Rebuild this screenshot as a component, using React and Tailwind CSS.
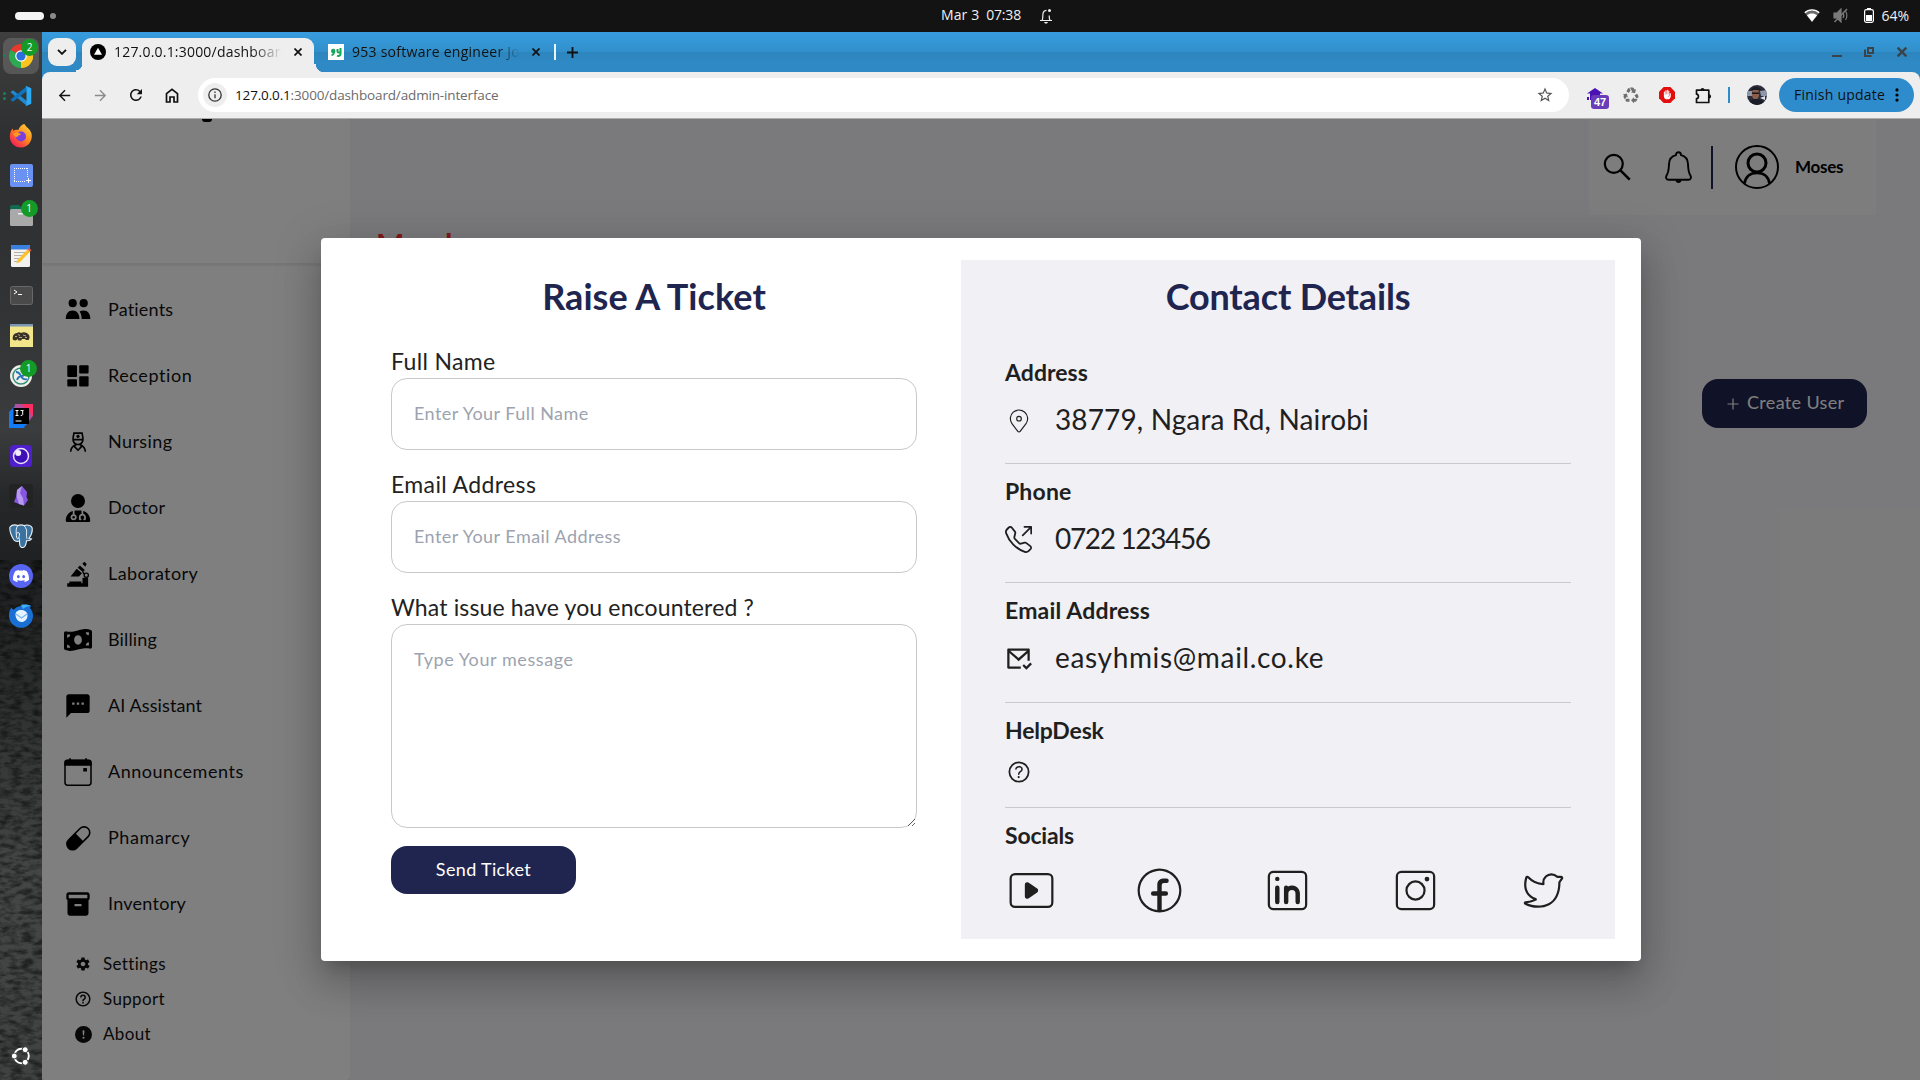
import React from 'react';
import { LiaUserNurseSolid } from 'react-icons/lia';
import { FaUserDoctor, FaMoneyBillWave } from 'react-icons/fa6';
import { MdSms, MdInventory2, MdArrowBack, MdArrowForward, MdRefresh, MdStarBorder, MdRecycling, MdFrontHand } from 'react-icons/md';
import { BsCapsule, BsExclamationCircleFill, BsTelephoneOutbound } from 'react-icons/bs';
import { IoMdSettings } from 'react-icons/io';
import { IoHelpCircleOutline } from 'react-icons/io5';
import { BiHelpCircle } from 'react-icons/bi';
import { RiMailCheckLine } from 'react-icons/ri';
import { CiLocationOn, CiYoutube, CiFacebook, CiLinkedin, CiInstagram, CiTwitter } from 'react-icons/ci';
import { SiDiscord } from 'react-icons/si';

/* ---------- sidebar icons ---------- */
const People = () => (
  <svg width="28" height="28" viewBox="0 0 28 28">
    <circle cx="8.700" cy="7.200" r="4.100" />
    <circle cx="19.700" cy="7.200" r="4.100" />
    <path d="M1.700 22.900C1.900 17.600 4.300 14.500 8.600 14.500s6.600 3.100 6.900 8.400z" />
    <path d="M15.600 15.500c1.100-.7 2.500-1 4-1 4.300 0 6.500 3.100 6.800 8.400h-8.700c-.1-3-.7-5.600-2.100-7.400z" />
  </svg>
);
const Tiles = () => (
  <svg width="28" height="28" viewBox="0 0 28 28">
    <rect x="3.300" y="3.300" width="9.700" height="11.800" rx="1" />
    <rect x="15.200" y="3.300" width="9.400" height="8.200" rx="1" />
    <rect x="3.300" y="17.300" width="9.700" height="7.200" rx="1" />
    <rect x="15.200" y="14.200" width="9.400" height="10.300" rx="1" />
  </svg>
);
const Microscope = () => (
  <svg width="28" height="28" viewBox="0 0 28 28">
    <path d="M18.300 3.800 20.600 1.700l2 2.200-1.300 2.900z" />
    <path d="M15.900 5.500l4.900 4.400-1.900 2.200-5.200-4.400z" />
    <path d="M12.700 8.800l5.300 4.500-3 3.300H6.600z" />
    <path d="M18 11.500l2 .2c.4 1 .4 2-.5 3z" />
    <circle cx="22.300" cy="15.300" r="2.100" fill="none" stroke="#000" strokeWidth="1.300" />
    <path d="M18.500 17.800h5.600v8.900H3.200v-3.400h2.200v-1.700h12v1.700h1.100z" />
  </svg>
);
const Calendar = () => (
  <svg width="28" height="28" viewBox="0 0 28 28">
    <rect x="1" y="2.400" width="26" height="24.800" rx="2.600" fill="none" stroke="#000" strokeWidth="1.500" />
    <path d="M.3 7.800V4.600a3 3 0 0 1 3-3h21.400a3 3 0 0 1 3 3v3.200zM5.200.3h1.700v3H5.200zM21.200.3h1.700v3h-1.700z" />
    <rect x="19.200" y="10" width="3.800" height="3.600" rx=".6" />
  </svg>
);

const NAV = [
  [<People />, 'Patients', 'tracking-[0.18px]'],
  [<Tiles />, 'Reception', 'tracking-[0.58px]'],
  [<LiaUserNurseSolid size={26} className="-ml-px" />, 'Nursing', 'tracking-[0.4px]'],
  [<FaUserDoctor size={28} />, 'Doctor', 'tracking-[0.3px]'],
  [<Microscope />, 'Laboratory', 'tracking-[0.4px]'],
  [<FaMoneyBillWave size={28} />, 'Billing', 'tracking-[0.15px]'],
  [<MdSms size={28} />, 'AI Assistant', 'tracking-[0.1px]'],
  [<Calendar />, 'Announcements', 'tracking-[0.52px]'],
  [<BsCapsule size={26} />, 'Phamarcy', 'tracking-[0.6px]'],
  [<MdInventory2 size={28} />, 'Inventory', 'tracking-[0.26px]'],
];

function Sidebar() {
  const row = 'h-[35.300px] flex items-center pl-[32px] gap-[11px]';
  return (
    <aside className="w-[308px] shrink-0 bg-white rounded-[4px] shadow-[0_0_8px_rgba(0,0,0,0.15)] flex flex-col overflow-hidden">
      <div className="h-[145px] shrink-0 border-b border-[#ececec] shadow-[0_1px_3px_rgba(0,0,0,0.12)]">
        <div className="ml-[160px] w-[10px] h-[3px] bg-black rounded-b-full" />
      </div>
      <nav className="mt-[13px] flex flex-col">
        {NAV.map(([icon, label, track]) => (
          <div key={label} className="h-[66px] flex items-center pl-[22px] gap-4">
            <span className="w-[28px] flex justify-center">{icon}</span>
            <span className={'text-[18px] leading-[22px] pb-[2px] text-[#101010] ' + track}>{label}</span>
          </div>
        ))}
      </nav>
      <div className="mt-[9px] flex flex-col text-[17px] tracking-[0.35px] text-[#101010]">
        <div className={row}><span className="w-[18px] flex justify-center"><IoMdSettings size={16} /></span>Settings</div>
        <div className={row}><span className="w-[18px] flex justify-center"><BiHelpCircle size={18} /></span>Support</div>
        <div className={row}><span className="w-[18px] flex justify-center"><BsExclamationCircleFill size={17} /></span>About</div>
      </div>
    </aside>
  );
}

function Content() {
  return (
    <main className="flex-1 bg-[#f5f5f8] flex flex-col">
      <div className="h-[96px] w-[287px] ml-[1239px] bg-[#fafafa] flex items-center pl-[14px] shrink-0">
        <svg width="28" height="28" viewBox="0 0 28 28" fill="none" stroke="#000" strokeWidth="2.200">
          <circle cx="10.800" cy="10.800" r="9" /><path d="M17.200 17.200l9.500 9.500" strokeWidth="2.600" />
        </svg>
        <svg className="ml-[34px]" width="27" height="33" viewBox="0 0 27 33" fill="none" stroke="#000" strokeWidth="1.900" strokeLinejoin="round">
          <path d="M11 4.200C11 2.300 12 1.200 13.500 1.200s2.500 1.100 2.500 3c4.200 1 6.800 4 7 8.800.2 6 .6 8.600 2.200 11 1.400 2.200.8 4.800-2 4.800H3.800c-2.800 0-3.400-2.600-2-4.800C3.400 21.600 3.800 19 4 13c.2-4.800 2.800-7.800 7-8.800z" />
          <path d="M10.500 29.300h6c-.3 1.700-1.300 2.700-3 2.700s-2.700-1-3-2.700z" fill="#000" stroke="none" />
        </svg>
        <div className="ml-[19px] w-[2px] h-[43px] bg-[#202550]" />
        <svg width="44" height="44" viewBox="0 0 44 44" fill="none" stroke="#000" className="ml-[22px]">
          <circle cx="22" cy="22" r="21" strokeWidth="2" />
          <circle cx="22" cy="18" r="9" strokeWidth="3" />
          <path d="M9.500 38.500C10.500 31.500 15.500 27.800 22 27.800s11.500 3.700 12.500 10.700" strokeWidth="2.800" />
        </svg>
        <span className="ml-[16px] text-[17px] font-bold tracking-[-0.3px] whitespace-nowrap">Moses</span>
      </div>
      <h1 className="mt-[11px] ml-[26px] text-[30px] leading-[36px] font-bold text-[#ff3535]">Members</h1>
      <button className="mt-[117px] ml-[1352px] w-[165px] h-[49px] rounded-[16px] bg-[#212450] text-white text-[18px] tracking-[0.34px] flex items-center pl-[25px] gap-[8px] whitespace-nowrap">
        <svg width="12" height="12" viewBox="0 0 12 12" stroke="#fff" strokeWidth="1.200"><path d="M6 .5v11M.5 6h11" /></svg>
        <span className="pb-[2px]">Create User</span>
      </button>
    </main>
  );
}

/* ---------- modal ---------- */
const SECTIONS = [
  ['Address', 'h-[119px]', 'tracking-[0.05px]', <CiLocationOn size={28} />, '38779, Ngara Rd, Nairobi', 'tracking-[0.13px]'],
  ['Phone', 'h-[119px]', 'tracking-[0.17px]', <BsTelephoneOutbound size={27} />, '0722 123456', 'tracking-[-1.35px]'],
  ['Email Address', 'h-[120px]', 'tracking-[0.17px]', <RiMailCheckLine size={27} />, 'easyhmis@mail.co.ke', 'tracking-[0.66px]'],
];

function Modal() {
  const field = 'block w-full rounded-[16px] border border-[#c9c9cb] bg-white px-[22px] text-[18px] placeholder:text-[#9ca3af] placeholder:opacity-100 outline-none ';
  const label = 'block h-[36px] leading-[38px] text-[23px] text-[#222] ';
  const title = 'h-[70px] leading-[72px] text-center text-[36px] font-bold text-[#202550] ';
  const head = 'h-[43px] leading-[45px] text-[23px] font-bold ';
  return (
    <div className="w-[1320px] h-[723px] bg-white rounded-[4px] px-[26px] py-[22px] flex shadow-[0px_11px_15px_-7px_rgba(0,0,0,0.2),0px_24px_38px_3px_rgba(0,0,0,0.14),0px_9px_46px_8px_rgba(0,0,0,0.12)]">
      <div className="w-[614px] px-[44px]">
        <h2 className={title + 'tracking-[0.05px]'}>Raise A Ticket</h2>
        <label className={label + 'mt-[12px] tracking-[0.35px]'}>Full Name</label>
        <input className={field + 'h-[72px] pb-[2px] tracking-[0.45px]'} placeholder="Enter Your Full Name" />
        <label className={label + 'mt-[15px] tracking-[0.37px]'}>Email Address</label>
        <input className={field + 'h-[72px] pb-[2px] tracking-[0.45px]'} placeholder="Enter Your Email Address" />
        <label className={label + 'mt-[15px] tracking-[0.14px]'}>What issue have you encountered ?</label>
        <textarea className={field + 'h-[204px] py-[20px] leading-[28px] resize tracking-[0.58px]'} placeholder="Type Your message" />
        <button className="mt-[18px] w-[185px] h-[48px] pb-[2px] rounded-[16px] bg-[#202550] text-white text-[18px] tracking-[0.35px]">Send Ticket</button>
      </div>
      <div className="w-[654px] h-[679px] bg-[#f0f0f5] px-[44px] text-[#1f1f1f]">
        <h2 className={title + 'tracking-[-0.16px]'}>Contact Details</h2>
        <div className="mt-[15px]">
          {SECTIONS.map(([name, height, t1, icon, value, t2]) => (
            <section key={name} className={'pt-[5px] border-b border-[#c9c9ce] ' + height}>
              <h3 className={head + t1}>{name}</h3>
              <div className="h-[52px] flex items-center gap-[22px]">
                <span className="w-[28px] pt-[3px] flex justify-center"><span className="-ml-px">{icon}</span></span>
                <span className={'text-[28px] leading-[52px] ' + t2}>{value}</span>
              </div>
            </section>
          ))}
          <section className="h-[105px] pt-[5px] border-b border-[#c9c9ce]">
            <h3 className={head + 'tracking-[-0.18px]'}>HelpDesk</h3>
            <div className="h-[42px] flex items-center"><IoHelpCircleOutline size={28} /></div>
          </section>
          <section className="pt-[5px]">
            <h3 className={head + 'tracking-[-0.17px]'}>Socials</h3>
            <div className="h-[67px] mr-[1px] pt-px flex items-center justify-between">
              <CiYoutube size={53} /><CiFacebook size={53} /><CiLinkedin size={53} /><CiInstagram size={53} /><CiTwitter size={53} />
            </div>
          </section>
        </div>
      </div>
    </div>
  );
}

/* ---------- desktop dock ---------- */
const Badge = ({ children }) => (
  <span className="absolute -top-[5px] -right-[5px] w-[17px] h-[17px] rounded-full bg-[#149a26] text-white text-[10px] leading-[17px] text-center font-['Open_Sans',sans-serif]">{children}</span>
);
const Chrome = () => (
  <svg width="24" height="24" viewBox="0 0 24 24">
    <path d="M12 12 1.600 6A12 12 0 0 1 22.400 6z" fill="#e33b2e" />
    <path d="M12 12 22.400 6A12 12 0 0 1 12 24z" fill="#fcc31e" />
    <path d="M12 12V24A12 12 0 0 1 1.600 6z" fill="#2da94f" />
    <path d="M12 6h10.400a12 12 0 0 1-5.200 16.800z" fill="#fcc31e" />
    <circle cx="12" cy="12" r="5.800" fill="#fff" /><circle cx="12" cy="12" r="4.600" fill="#2a6fe0" />
  </svg>
);
const Code = () => (
  <svg width="22" height="22" viewBox="0 0 24 24">
    <path d="M.5 8 3.200 5.800 18.500 17.500V23z" fill="#1f8ad2" /><path d="M.5 16 3.200 18.200 18.500 6.500V1z" fill="#0e73bd" />
    <path d="M17 .8l6.200 2.800v16.800L17 23.200l1-2V3z" fill="#2cabf2" />
  </svg>
);
const Firefox = () => (
  <svg width="24" height="24" viewBox="0 0 24 24">
    <defs><linearGradient id="ff" x1="1" y1="0" x2=".2" y2="1"><stop offset="0" stopColor="#ffe245" /><stop offset=".5" stopColor="#ff8a1c" /><stop offset="1" stopColor="#f5155c" /></linearGradient></defs>
    <path d="M15.500 0c1 3 5.500 4.500 7 9.500 1.500 7-3.500 14-10.500 14S.8 18.500.8 12.500C.8 9 2 6 3.700 4.500l.6 2.200C6 5.500 8 5.500 9.500 6 10 3.500 12.500.5 15.500 0z" fill="url(#ff)" />
    <circle cx="12" cy="12.500" r="5" fill="#7a3fe0" /><path d="M4 10c3-2 6-2 8 .5-2 .8-3 1-3.500 2.500C6.500 13 5 12 4 10z" fill="#ff9a20" />
  </svg>
);
const Shot = () => (
  <svg width="23" height="23" viewBox="0 0 23 23"><rect width="23" height="23" rx="2" fill="#6a92f3" /><path d="M4 4.500h14M4 17.500h12M4.500 4v14M17.500 4v10" fill="none" stroke="#fff" strokeDasharray="1 1" /><path d="M18.500 14v5M16 16.500h5" stroke="#fff" /></svg>
);
const Files = () => (
  <svg width="23" height="21" viewBox="0 0 23 21"><path d="M0 2a2 2 0 0 1 2-2h7l2 2h10v8H0z" fill="#0f6b50" /><rect y="4" width="23" height="17" rx="1.500" fill="#a9a9a9" /><rect x="8" y="8" width="7" height="1.500" fill="#eee" /></svg>
);
const Editor = () => (
  <svg width="22" height="24" viewBox="0 0 22 24"><rect x="1" y="1" width="19" height="22" rx="1.500" fill="#f4f2ee" /><path d="M1 2.500A1.500 1.500 0 0 1 2.500 1h16A1.500 1.500 0 0 1 20 2.500V5.500H1z" fill="#3a80df" /><path d="M4 8.500h12M4 11.500h10M4 14.500h8M4 17.500h6" stroke="#b4b0a8" /><path d="M6.500 19.500l1-3.500L17.500 5.500l2.500 2.200L10 18z" fill="#fbc22b" /><path d="M17.500 5.500l1.500-1.500 2.500 2.200-1.500 1.500z" fill="#e8594f" /></svg>
);
const Terminal = () => (
  <svg className="-mt-px" width="23" height="19" viewBox="0 0 23 19"><rect x=".5" y=".5" width="22" height="18" rx="2" fill="#4a4a4a" stroke="#686868" /><path d="M4 4l3 2-3 2M8 8.500h4" stroke="#fff" fill="none" /></svg>
);
const Beaver = () => (
  <svg width="23" height="23" viewBox="0 0 23 23"><rect width="23" height="23" fill="#f2e58a" /><rect width="23" height="2.500" fill="#7c97b5" /><path d="M3 16c-1-4 1-7 4-7 1-1 3-1 4 0 3-1.500 6-.5 8 2 1 2 .5 4-.5 5h-2.500l-1-1h-3l-.8 1.500H8.500l-1-1.500-1.500 1.500z" fill="#3a3227" /><path d="M8 10.500l2 1M13 11l3 1M5 12.500h2M9 13.500h3M15 13.500h2" stroke="#b3a686" /></svg>
);
const Swirl = () => (
  <svg width="22" height="22" viewBox="0 0 22 22"><circle cx="11" cy="11" r="11" fill="#f0efe9" /><circle cx="11" cy="11" r="8" fill="none" stroke="#2f8f78" strokeWidth="1.500" /><path d="M6 7c3 0 4 2 5 4s3 4 6 3M7 15c1-3 3-4 5-4s4-2 4-5" stroke="#2b73b8" strokeWidth="1.800" fill="none" /></svg>
);
const Idea = () => (
  <svg width="24" height="24" viewBox="0 0 24 24"><path d="M0 8 8 0v16l8 8H0z" fill="#137bf5" /><path d="M6 0h18v12l-8 10L4 12z" fill="#b0509f" /><path d="M12 0h12v12z" fill="#fb2d62" /><path d="M0 10l5-2v10l13 2-4 4H0z" fill="#137bf5" /><rect x="4.500" y="4" width="15.500" height="16" fill="#000" /><path d="M6.500 6.500h3M8 6.500v5M6.500 11.500h3M11.500 6.500h3M13.700 6.500v4q0 1-2 1M6.500 17h6" stroke="#fff" fill="none" /></svg>
);
const Insomnia = () => (
  <svg width="22" height="22" viewBox="0 0 22 22"><rect width="22" height="22" rx="3.500" fill="#4f1fcb" /><circle cx="11" cy="11" r="7.500" fill="#3d0fb5" stroke="#e9e3fa" strokeWidth="1.500" /><circle cx="8.200" cy="8" r="3" fill="#f2eefc" /></svg>
);
const Crystal = () => (
  <svg width="24" height="24" viewBox="0 0 24 24"><rect width="24" height="24" rx="4" fill="#232323" /><path d="M13 2l5 6-.5 5 1.500 3-4 5.500-5-1.500L5 18l2.500-6L8 6z" fill="#8556e0" /><path d="M13 2l-2 7 3 5 1 7.500-5-1.500-2.500-8L8 6z" fill="#b79af0" /></svg>
);
const Bird = () => (
  <svg width="24" height="24" viewBox="0 0 24 24"><path d="M12 2c5-2 8-1 10 0l-1 2c2 2 3 5 3 8a12 12 0 1 1-24-.5C0 8 1 5 2.500 3.500 3 5 4 5.500 5 5.500 7 3 9 2.500 12 2z" fill="#1a6fd4" /><path d="M6.500 10.500c0-3 2.500-4.500 5.500-4.500s6.500 1.500 6.500 5.500-3 6.500-6 6.500-6-3-6-7.500z" fill="#e6f3ff" /><path d="M7 10l5.500 4 5.500-4" stroke="#79b6ee" fill="none" strokeWidth="1.300" /><path d="M12 1c4-1 8 0 10 1-3 0-6 1-8 3z" fill="#3fb0f5" /></svg>
);
const Elephant = () => (
  <svg width="24" height="24" viewBox="0 0 24 24">
    <path d="M1 3C3 .5 7 .8 9 1.500c2-.8 4-.8 6 0 3-1 7-.5 8 2 .8 3-1 8-3 11l2.500.5c-1 1.500-3 2-5 1.700-.3 3-.5 6.300-3.500 6.800-3 .5-3.500-2-3.500-6.500-2 .5-4 1-5.500-1C2.500 12.500.2 6.500 1 3z" fill="#3a72a0" stroke="#eef3f7" strokeWidth="1.100" />
    <path d="M8.500 2C7 4 7 7 7.300 10c.2 2.500 0 4.500 1.700 5M15 1.800c2.300 2 3 4.500 2.500 8-.2 2 .2 4 .5 5M10.500 17c.2-2 .2-3-1-3M8 9c1.500-.8 2.500-.5 2.500 1 0 2-.5 3-1 4.500" fill="none" stroke="#eef3f7" strokeWidth="1" />
  </svg>
);
const DOCK = [
  [<Chrome />, '2'], [<Code />], [<Firefox />], [<Shot />], [<Files />, '1'], [<Editor />], [<Terminal />], [<Beaver />],
  [<Swirl />, '1'], [<Idea />], [<Insomnia />], [<Crystal />], [<Elephant />],
  [<span className="w-[24px] h-[24px] rounded-full bg-[#5865f2] flex items-center justify-center"><SiDiscord size={16} color="#fff" /></span>],
  [<Bird />],
];
const DOTS = { 0: 1, 1: 2 };

function Dock() {
  return (
    <div className="relative w-[42px] shrink-0 bg-[linear-gradient(180deg,#403f3f_0%,#2e3031_10%,#303233_25%,#3a3c3e_38%,#27282a_44%,#1e1f20_52%,#2c2d2d_62%,#444646_80%,#404242_100%)] flex flex-col items-center pt-[3.500px]">
      <svg className="absolute inset-x-0 bottom-0 opacity-50" width="42" height="520">
        <filter id="gravel"><feTurbulence type="fractalNoise" baseFrequency="0.09 0.2" numOctaves="3" seed="4" /><feColorMatrix values="0 0 0 0 0  0 0 0 0 0  0 0 0 0 0  2.600 0 0 0 -1" /></filter>
        <rect width="42" height="520" filter="url(#gravel)" />
      </svg>
      {DOCK.map(([icon, badge], i) => (
        <div key={i} className="relative h-[40px] w-[42px] flex items-center justify-center">
          {i === 0 && <span className="absolute w-[36px] h-[36px] rounded-[8px] bg-white/15" />}
          <span className="absolute left-[3px] flex flex-col gap-[2px]">
            {Array.from({ length: DOTS[i] || 0 }, (_, k) => <i key={k} className="w-[3px] h-[3px] rounded-full bg-[#12855a]" />)}
          </span>
          <span className="relative">{icon}{badge && <Badge>{badge}</Badge>}</span>
        </div>
      ))}
      <svg className="relative mt-auto mb-[14px]" width="20" height="20" viewBox="0 0 20 20">
        <circle cx="10.500" cy="10" r="7.300" fill="none" stroke="#fff" strokeWidth="1.900" />
        <g fill="#fff" stroke="#3a3a3a" strokeWidth="1"><circle cx="3.300" cy="10" r="3" /><circle cx="14.200" cy="3.700" r="3" /><circle cx="14.200" cy="16.300" r="3" /></g>
      </svg>
    </div>
  );
}

/* ---------- browser chrome ---------- */
const Cross = ({ size = 8, w = 1.7, color = '#111' }) => (
  <svg width={size} height={size} viewBox="0 0 8 8" stroke={color} strokeWidth={w}><path d="M.5 .5l7 7M7.500 .5l-7 7" /></svg>
);

function Tabs() {
  return (
    <div className="h-[40px] bg-[linear-gradient(180deg,#379cdf_0%,#3190cb_49%,#2d85bd_50%,#2f89c4_75%,#2f89c6_100%)] flex items-end pl-[6px] text-[14px] text-[#111]">
      <div className="w-[28px] h-[28px] mb-[6px] rounded-[9px] bg-[#eeeeee] flex items-center justify-center">
        <svg width="10" height="6" viewBox="0 0 10 6" fill="none" stroke="#111" strokeWidth="1.900"><path d="M1 .8l4 4 4-4" /></svg>
      </div>
      <div className="w-[6px] h-[8px] bg-[radial-gradient(circle_at_0_0,transparent_6px,#eeeeee_6.500px)]" />
      <div className="w-[232px] h-[34px] rounded-t-[9px] bg-[#eeeeee] flex items-center pl-[8px] pb-[6px]">
        <svg width="16" height="16" viewBox="0 0 16 16"><circle cx="8" cy="8" r="8" /><path d="M8 3.800l4 7H4z" fill="#fff" /></svg>
        <div className="ml-[8px] -mt-[1px] w-[168px] overflow-hidden whitespace-nowrap tracking-[0.2px] [mask-image:linear-gradient(90deg,#000_82%,transparent)]">127.0.0.1:3000/dashboard</div>
        <div className="ml-[12px]"><Cross /></div>
      </div>
      <div className="w-[10px] h-[8px] bg-[radial-gradient(circle_at_100%_0,transparent_8px,#eeeeee_8.500px)]" />
      <div className="flex items-center h-[40px] pl-[4px]">
        <svg width="16" height="16" viewBox="0 0 16 16"><rect width="16" height="16" fill="#fff" /><circle cx="5.200" cy="7" r="2.200" fill="#14a85a" /><path d="M6.500 7c0 2.500-1 3.800-3 4.300" stroke="#14a85a" strokeWidth="1.500" fill="none" /><path d="M9.500 5v2q0 1.500 1.500 1.500h1.500M12.500 4v6c0 1.800-2 2.300-3.500 1.600" stroke="#14a85a" strokeWidth="2" fill="none" /></svg>
        <div className="ml-[8px] -mt-[2px] w-[169px] overflow-hidden whitespace-nowrap tracking-[0.26px] [mask-image:linear-gradient(90deg,#000_86%,transparent_99%)]">953 software engineer Jobs</div>
        <div className="ml-[11px]"><Cross /></div>
        <div className="ml-[14px] w-[2px] h-[16px] bg-white/90" />
        <svg className="ml-[11px]" width="11" height="11" viewBox="0 0 11 11" stroke="#111" strokeWidth="1.800"><path d="M5.500 0v11M0 5.500h11" /></svg>
      </div>
      <div className="ml-auto flex items-center h-[40px] pr-[13px]">
        <i className="w-[10px] h-[2px] mt-[7px] bg-[#3b4348]" />
        <svg className="ml-[22px]" width="10" height="10" viewBox="0 0 10 10" fill="none" stroke="#3b4348" strokeWidth="2"><rect x="4" y="1" width="5" height="5" /><path d="M1 2.500V9h6.500" /></svg>
        <div className="ml-[23px]"><Cross size={10} w={1.9} color="#3b4348" /></div>
      </div>
    </div>
  );
}

function Toolbar() {
  const cell = 'w-[36px] flex justify-center shrink-0 ';
  return (
    <div className="h-[47px] bg-[#2f89c6] shrink-0">
      <div className="h-[47px] bg-[#eeeeee] rounded-t-[8px] border-b border-[#adadad] flex items-center pl-[4px] pr-[6px] text-[#111]">
        <div className={cell}><MdArrowBack size={17} /></div>
        <div className={cell + 'text-[#8b8b8b]'}><MdArrowForward size={17} /></div>
        <div className={cell}><MdRefresh size={18} /></div>
        <div className={cell}><svg width="14" height="15" viewBox="0 0 14 15" fill="none" stroke="#111" strokeWidth="1.700"><path d="M1.500 5.700 7 1.300l5.500 4.400V14H9V9H5v5H1.500z" /></svg></div>
        <div className="ml-[8px] w-[1371px] h-[34px] rounded-full bg-white flex items-center pl-[5px] pr-[15px] shrink-0">
          <div className="w-[24px] h-[24px] rounded-full bg-[#eeeeee] flex items-center justify-center">
            <svg width="14" height="14" viewBox="0 0 14 14" fill="none" stroke="#333"><circle cx="7" cy="7" r="6.200" strokeWidth="1.300" /><path d="M7 6.300v4M7 3.600v1.300" strokeWidth="1.300" /></svg>
          </div>
          <div className="ml-[8px] text-[13.500px] tracking-[-0.15px] text-[#6b6b6b]"><span className="text-[#111]">127.0.0.1</span>:3000/dashboard/admin-interface</div>
          <MdStarBorder size={18} className="ml-auto text-[#555]" />
        </div>
        <div className="ml-[8px] w-[36px] relative flex shrink-0">
          <svg className="ml-[10px] -mt-[2px]" width="16" height="13" viewBox="0 0 16 13"><path d="M8 0l8 5.500H0z" fill="#4a12b4" /><path d="M0 9h2v3H0zM3 5h10v7H3z" fill="#4a12b4" /></svg>
          <span className="absolute left-[14px] top-[5px] w-[18px] h-[14px] rounded-[3px] bg-[#6a3cb8] text-white text-[11px] leading-[14px] font-bold text-center font-['Liberation_Sans',sans-serif]">47</span>
        </div>
        <div className={cell}><MdRecycling size={18} className="text-[#6f6f6f]" /></div>
        <div className={cell}>
          <svg width="16" height="16" viewBox="0 0 16 16"><path d="M4.700 0h6.600L16 4.700v6.600L11.300 16H4.700L0 11.300V4.700z" fill="#e40d0d" /><g transform="translate(3 2.600)" color="#fff"><MdFrontHand size={10} /></g></svg>
        </div>
        <div className={cell}>
          <svg width="17" height="17" viewBox="0 0 17 17"><path d="M1.500 3.200h12.300v12.300H1.500v-3.800c2.600-.3 2.600-4.200 0-4.500z" fill="none" stroke="#111" strokeWidth="1.700" strokeLinejoin="round" /><path d="M5.500 3a2 2 0 0 1 4 0zM14 7.300a2 2 0 0 1 0 4.200z" fill="#111" /></svg>
        </div>
        <div className="ml-[7px] w-[2px] h-[16px] bg-[#2f8ccc]" />
        <svg className="ml-[17px] shrink-0" width="20" height="20" viewBox="0 0 20 20">
          <clipPath id="av"><circle cx="10" cy="10" r="10" /></clipPath>
          <g clipPath="url(#av)"><rect width="20" height="20" fill="#2b2d3c" /><path d="M0 6h5v5H0zM13 6l7-1v6h-6z" fill="#8e98aa" /><ellipse cx="8.500" cy="9" rx="3.700" ry="5.500" fill="#8d5e4b" /><path d="M5 7.500h7v1.600H5z" fill="#17171c" /><path d="M4 5c1-4 9-4 10 0z" fill="#1c1c24" /><path d="M1 20c1-5 4-6 8-6s8 2 9 6z" fill="#1a1c28" /><path d="M13 13l5-2v4z" fill="#dfe3ec" /></g>
        </svg>
        <div className="ml-[12px] w-[135px] h-[34px] rounded-full bg-[#2f8ccc] flex items-center pl-[15px] pb-px text-[14px] tracking-[0.23px] whitespace-nowrap shrink-0">
          Finish update
          <svg className="ml-[10px]" width="4" height="14" viewBox="0 0 4 14"><circle cx="2" cy="1.900" r="1.600" /><circle cx="2" cy="7" r="1.600" /><circle cx="2" cy="12.100" r="1.600" /></svg>
        </div>
      </div>
    </div>
  );
}

function TopBar() {
  return (
    <div className="h-[32px] bg-[#131313] text-[#f0f0f0] text-[14px] grid grid-cols-[941px_1fr_auto] items-center">
      <div className="flex items-center pl-[15px] gap-[6px]"><i className="w-[29px] h-[8px] rounded-full bg-[#f5f5f5]" /><i className="w-[6px] h-[6px] rounded-full bg-[#8a8a8a]" /></div>
      <div className="flex items-center pb-[3px]">
        <span className="tracking-[0.1px]">Mar 3</span><span className="ml-[7px] tracking-[-0.2px]">07:38</span>
        <svg className="ml-[19px] mt-[3px]" width="12" height="16" viewBox="0 0 12 16" fill="none" stroke="#f0f0f0" strokeWidth="1.200"><path d="M0 12.500h12M2 12.500c1-1.500.8-4 .9-6C3 4 4.200 2.600 6.500 2.400M10 12.500c-.9-1.500-.8-3-.8-5" /><circle cx="9.500" cy="2.600" r="1.500" fill="#f0f0f0" stroke="none" /><path d="M4 14h4l-1 1.500H5z" fill="#f0f0f0" stroke="none" /></svg>
      </div>
      <div className="flex items-center pr-[11px] pb-px">
        <svg width="16" height="13" viewBox="0 0 16 13"><path d="M8 13 .5 3.500C4.500-.6 11.500-.6 15.500 3.500z" fill="#6c6c6c" /><path d="M.8 3.800C4.700-.2 11.300-.2 15.200 3.800" fill="none" stroke="#fff" strokeWidth="1.300" /><path d="M8 12.800 2.900 6.300c3-2.300 7.200-2.300 10.200 0z" fill="#fff" /></svg>
        <svg className="ml-[13px]" width="16" height="15" viewBox="0 0 16 15" fill="none" stroke="#7a7a7a" strokeWidth="1.200"><path d="M1 5h3l4-4v13L4 10H1z" fill="#7a7a7a" /><path d="M10 5c1 1.500 1 3.500 0 5M12.500 3c1.800 2.500 1.800 6.500 0 9" /><path d="M1.500 14 14 1" strokeWidth="1.500" /></svg>
        <svg className="ml-[15px]" width="10" height="15" viewBox="0 0 10 15"><path d="M3 0h4v2H3z" fill="#fff" /><rect x=".6" y="1.600" width="8.800" height="12.800" rx="1.800" fill="none" stroke="#fff" strokeWidth="1.200" /><rect x="2" y="7" width="6" height="6" fill="#fff" /></svg>
        <span className="ml-[7px]">64%</span>
      </div>
    </div>
  );
}

export default function App() {
  return (
    <div className="w-[1920px] h-[1080px] overflow-hidden flex flex-col font-['Open_Sans','Noto_Sans',sans-serif]">
      <TopBar />
      <div className="flex flex-1 min-h-0">
        <Dock />
        <div className="flex-1 min-w-0 flex flex-col">
          <Tabs />
          <Toolbar />
          <div className="relative flex-1 min-h-0 bg-[#f5f5f8] flex overflow-hidden font-['Lato',sans-serif] text-black">
            <Sidebar />
            <Content />
            <div className="absolute inset-0 bg-black/50 flex items-center justify-center">
              <Modal />
            </div>
          </div>
        </div>
      </div>
    </div>
  );
}
